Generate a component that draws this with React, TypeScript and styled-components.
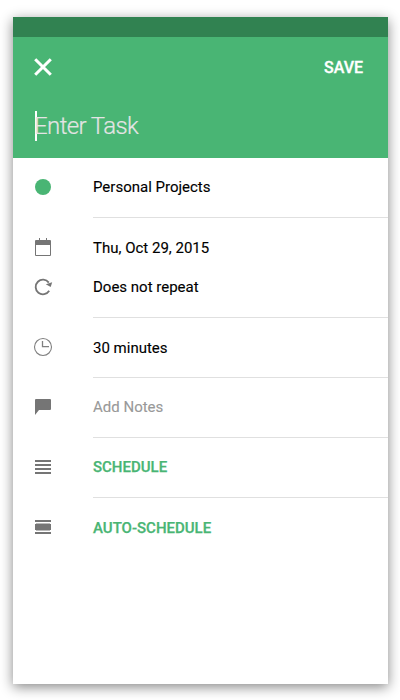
import React from "react";
import styled, { createGlobalStyle } from "styled-components";

const GREEN = "#49b574";
const GREY = "#757575";

const GlobalStyle = createGlobalStyle`
  *, *::before, *::after { box-sizing: border-box; }
  body {
    margin: 0;
    background: #fff;
    font-family: Roboto, "Liberation Sans", sans-serif;
  }
`;

const Page = styled.div`
  height: 700px;
  padding: 17px 12px 16px 13px;
  overflow: hidden;
`;

const Phone = styled.main`
  width: 375px;
  height: 667px;
  background: #fff;
  box-shadow: 0 3px 12px rgba(0, 0, 0, 0.48);
`;

const StatusBar = styled.div`
  height: 20px;
  background: #318251;
`;

const Header = styled.header`
  height: 121px;
  background: ${GREEN};
  color: #fff;
`;

const Toolbar = styled.div`
  display: flex;
  align-items: center;
  justify-content: space-between;
  height: 60px;
  padding: 0 25px 0 20px;
`;

const Button = styled.button`
  display: flex;
  padding: 0;
  border: 0;
  background: none;
  color: inherit;
  cursor: pointer;
`;

const SaveButton = styled(Button)`
  padding-top: 2px;
  font: 500 16px/20px Roboto, "Liberation Sans", sans-serif;
  -webkit-text-stroke: 0.3px currentColor;
`;

const TaskField = styled.div`
  display: flex;
  align-items: center;
  height: 31px;
  margin: 13px 0 0 22px;
`;

const Caret = styled.span`
  width: 2px;
  height: 30px;
  margin-right: -3px;
  background: #fff;
`;

const Placeholder = styled.span`
  color: #e4e4e4;
  font-size: 24px;
  font-weight: 300;
  letter-spacing: -0.6px;
  line-height: 30px;
  -webkit-text-stroke: 0.2px currentColor;
`;

const Section = styled.section<{ $height: number }>`
  display: grid;
  grid-template-columns: 80px 1fr;
  height: ${(p) => p.$height}px;
`;

const IconColumn = styled.div`
  display: flex;
  flex-direction: column;
  padding: 9px 0 0 20px;
`;

const IconCell = styled.div`
  display: flex;
  align-items: center;
  height: 40px;
`;

const Content = styled.div<{ $last?: boolean; $top: number }>`
  padding-top: ${(p) => p.$top}px;
  border-bottom: ${(p) => (p.$last ? "0" : "1px solid #e0e0e0")};
`;

const Line = styled.div<{ $tone?: "muted" | "action" }>`
  height: 39px;
  font-size: 15px;
  line-height: 40px;
  white-space: nowrap;
  color: ${(p) => (p.$tone === "muted" ? "#999" : p.$tone === "action" ? GREEN : "#000")};
  font-weight: ${(p) => (p.$tone === "action" ? 500 : 400)};
  -webkit-text-stroke: ${(p) => (p.$tone === "action" ? "0.25px" : "0.12px")} currentColor;
`;

const Icon = ({ children }: { children: React.ReactNode }) => (
  <svg width="20" height="20" viewBox="0 0 20 20" fill={GREY} aria-hidden="true">
    {children}
  </svg>
);

const icons = {
  dot: <circle cx="10" cy="10" r="8" fill={GREEN} />,
  calendar: (
    <>
      <path d="M6 1h1v2H6zM13 1h1v2h-1z" />
      <path fillRule="evenodd" d="M3 3h14a1 1 0 0 1 1 1v14a1 1 0 0 1-1 1H3a1 1 0 0 1-1-1V4a1 1 0 0 1 1-1zM3 8v10h14V8z" />
    </>
  ),
  repeat: (
    <>
      <path d="M16.2 13.8A7.3 7.3 0 1 1 15.8 5.6" fill="none" stroke={GREY} strokeWidth="1.8" />
      <path d="M19.2 5.2L17.7 10 12.8 7.3z" />
    </>
  ),
  clock: (
    <g fill="none" stroke="#808080">
      <circle cx="10" cy="10" r="8.5" strokeWidth="1.1" />
      <path d="M9.5 4v5.6H16" strokeWidth="1.3" />
    </g>
  ),
  note: <path d="M3 2h14a1 1 0 0 1 1 1v9a1 1 0 0 1-1 1H6l-4 5V3a1 1 0 0 1 1-1z" />,
  lines: <path d="M2 3h16v2H2zM2 7h16v2H2zM2 11h16v2H2zM2 15h16v2H2z" />,
  auto: (
    <>
      <path d="M2 3h16v2H2zM2 7h16v6H2zM2 15h16v2H2z" />
      <path d="M3 6h14v1H3zM3 13h14v1H3z" opacity=".5" />
    </>
  ),
};

type Item = { icon: keyof typeof icons; text: string; tone?: "muted" | "action" };

const sections: { height: number; top: number; items: Item[] }[] = [
  { height: 60, top: 9, items: [{ icon: "dot", text: "Personal Projects" }] },
  {
    height: 100,
    top: 10,
    items: [
      { icon: "calendar", text: "Thu, Oct 29, 2015" },
      { icon: "repeat", text: "Does not repeat" },
    ],
  },
  { height: 60, top: 10, items: [{ icon: "clock", text: "30 minutes" }] },
  { height: 60, top: 9, items: [{ icon: "note", text: "Add Notes", tone: "muted" }] },
  { height: 60, top: 9, items: [{ icon: "lines", text: "SCHEDULE", tone: "action" }] },
  { height: 60, top: 10, items: [{ icon: "auto", text: "AUTO-SCHEDULE", tone: "action" }] },
];

export default function App() {
  return (
    <>
      <GlobalStyle />
      <Page>
        <Phone>
          <StatusBar />
          <Header>
            <Toolbar>
              <Button aria-label="Close">
                <svg width="20" height="20" viewBox="0 0 20 20" stroke="#fff" strokeWidth="3">
                  <path d="M2.2 2.2l15.6 15.6M17.8 2.2L2.2 17.8" />
                </svg>
              </Button>
              <SaveButton>SAVE</SaveButton>
            </Toolbar>
            <TaskField>
              <Caret />
              <Placeholder>Enter Task</Placeholder>
            </TaskField>
          </Header>
          {sections.map((section, i) => (
            <Section key={section.items[0].text} $height={section.height}>
              <IconColumn>
                {section.items.map((item) => (
                  <IconCell key={item.icon}>
                    <Icon>{icons[item.icon]}</Icon>
                  </IconCell>
                ))}
              </IconColumn>
              <Content $last={i === sections.length - 1} $top={section.top}>
                {section.items.map((item) => (
                  <Line key={item.text} $tone={item.tone}>
                    {item.text}
                  </Line>
                ))}
              </Content>
            </Section>
          ))}
        </Phone>
      </Page>
    </>
  );
}
